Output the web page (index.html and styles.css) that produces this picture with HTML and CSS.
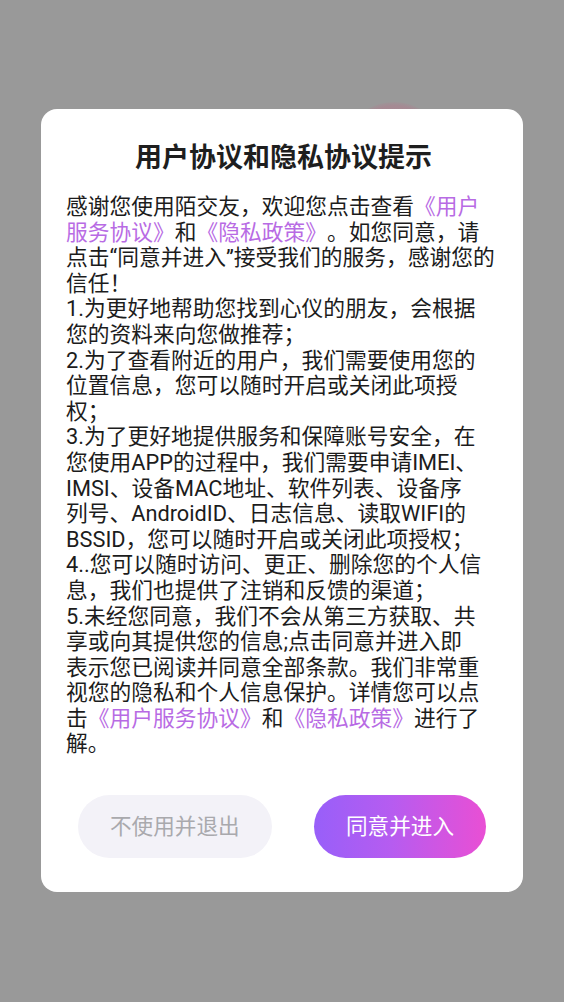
FILE: index.html
```html
<!DOCTYPE html>
<html lang="zh-CN">
<head>
<meta charset="utf-8">
<title>用户协议和隐私协议提示</title>
<link rel="stylesheet" href="styles.css">
</head>
<body>
<div class="screen">
  <div class="blob"></div>
  <div class="dialog">
    <h1 class="title">用户协议和隐私协议提示</h1>
    <div class="content">
      <p>感谢您使用陌交友，欢迎您点击查看<span class="link">《用户<br>服务协议》</span>和<span class="link">《隐私政策》</span>。如您同意，请<br>点击“同意并进入”接受我们的服务，感谢您的<br>信任！</p>
      <p>1.为更好地帮助您找到心仪的朋友，会根据<br>您的资料来向您做推荐；</p>
      <p>2.为了查看附近的用户，我们需要使用您的<br>位置信息，您可以随时开启或关闭此项授<br>权；</p>
      <p>3.为了更好地提供服务和保障账号安全，在<br>您使用APP的过程中，我们需要申请IMEI、<br>IMSI、设备MAC地址、软件列表、设备序<br>列号、AndroidID、日志信息、读取WIFI的<br>BSSID，您可以随时开启或关闭此项授权；</p>
      <p>4..您可以随时访问、更正、删除您的个人信<br>息，我们也提供了注销和反馈的渠道；</p>
      <p>5.未经您同意，我们不会从第三方获取、共<br>享或向其提供您的信息;点击同意并进入即<br>表示您已阅读并同意全部条款。我们非常重<br>视您的隐私和个人信息保护。详情您可以点<br>击<span class="link">《用户服务协议》</span>和<span class="link">《隐私政策》</span>进行了<br>解。</p>
    </div>
    <div class="actions">
      <button class="btn btn-cancel">不使用并退出</button>
      <button class="btn btn-ok">同意并进入</button>
    </div>
  </div>
</div>
</body>
</html>
```
FILE: styles.css
```css
* { box-sizing: border-box; }
html, body {
  margin: 0;
  padding: 0;
  background: #999999;
}
body {
  font-family: Roboto, "Noto Sans CJK SC", sans-serif;
  color: #1c1c1c;
}
.screen {
  position: relative;
  width: 564px;
  height: 1002px;
  padding-top: 109px;
  overflow: hidden;
}
.blob {
  position: absolute;
  left: 356px;
  top: 102px;
  width: 76px;
  height: 50px;
  border-radius: 50%;
  background: radial-gradient(ellipse at center, #a88892 0%, #a58a93 60%, rgba(153,153,153,0) 75%);
}
.dialog {
  position: relative;
  z-index: 1;
  width: 482px;
  margin-left: 41px;
  background: #ffffff;
  border-radius: 16px;
  padding: 33px 22px 34px 25px;
}
.title {
  margin: 0;
  font-size: 27px;
  line-height: 32px;
  font-weight: 700;
  text-align: center;
  color: #1e1e1e;
}
.content {
  margin-top: 20px;
  font-size: 21.75px;
  line-height: 25.6px;
  color: #1c1c1c;
  white-space: nowrap;
  text-spacing-trim: space-all;
}
.content p {
  margin: 0;
}
.link {
  color: #b86be4;
}
.actions {
  margin-top: 38px;
  padding: 0 15px 0 12px;
  display: flex;
  justify-content: space-between;
}
.btn {
  height: 63px;
  border: 0;
  border-radius: 32px;
  padding: 0 32px;
  font-family: Roboto, "Noto Sans CJK SC", sans-serif;
  font-size: 21.6px;
  line-height: 63px;
}
.btn-cancel {
  background: #f3f2f8;
  color: #a9a9ad;
}
.btn-ok {
  background: linear-gradient(90deg, #985ff9 0%, #b65cf0 45%, #e94fd4 100%);
  color: #ffffff;
}
```
